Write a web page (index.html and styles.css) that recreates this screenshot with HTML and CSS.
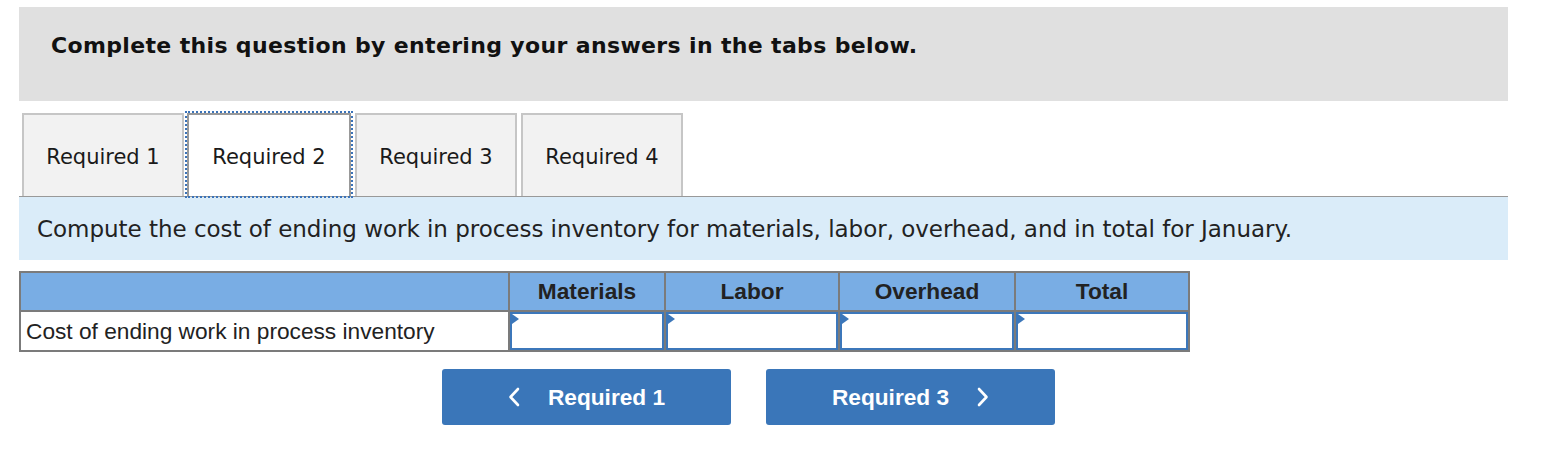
FILE: index.html
```html
<!DOCTYPE html>
<html>
<head>
<meta charset="utf-8">
<link rel="stylesheet" href="styles.css">
</head>
<body>
<div class="wrap">
  <div class="banner">Complete this question by entering your answers in the tabs below.</div>
  <div class="tabs">
    <div class="tab">Required 1</div>
    <div class="tab active">Required 2</div>
    <div class="tab">Required 3</div>
    <div class="tab">Required 4</div>
  </div>
  <div class="prompt">Compute the cost of ending work in process inventory for materials, labor, overhead, and in total for January.</div>
  <table class="grid">
    <thead>
      <tr>
        <th class="c-label"></th>
        <th class="c-mat">Materials</th>
        <th class="c-lab">Labor</th>
        <th class="c-ovh">Overhead</th>
        <th class="c-tot">Total</th>
      </tr>
    </thead>
    <tbody>
      <tr>
        <td class="label">Cost of ending work in process inventory</td>
        <td class="cell"><div class="inp"></div></td>
        <td class="cell"><div class="inp"></div></td>
        <td class="cell"><div class="inp"></div></td>
        <td class="cell"><div class="inp"></div></td>
      </tr>
    </tbody>
  </table>
  <div class="nav">
    <div class="btn">
      <svg class="chev" width="12" height="20" viewBox="0 0 12 20"><polyline points="10,2 2.5,10 10,18" fill="none" stroke="#fff" stroke-width="2.6" stroke-linecap="round" stroke-linejoin="round"/></svg>
      <span>Required 1</span>
    </div>
    <div class="btn">
      <span>Required 3</span>
      <svg class="chev" width="12" height="20" viewBox="0 0 12 20"><polyline points="2,2 9.5,10 2,18" fill="none" stroke="#fff" stroke-width="2.6" stroke-linecap="round" stroke-linejoin="round"/></svg>
    </div>
  </div>
</div>
</body>
</html>
```

FILE: styles.css
```css
html, body {
  margin: 0;
  padding: 0;
  background: #fff;
}
.wrap {
  margin-left: 19px;
  width: 1489px;
  padding-top: 7px;
}
.banner {
  background: #e0e0e0;
  height: 94px;
  box-sizing: border-box;
  padding: 26px 0 0 32px;
  font-family: "DejaVu Sans", Verdana, sans-serif;
  font-weight: bold;
  font-size: 22px;
  letter-spacing: 0.35px;
  line-height: 1.164;
  color: #111;
}
.tabs {
  display: flex;
  gap: 4px;
  margin-top: 12px;
  padding-left: 3px;
  border-bottom: 1px solid #999;
}
.tab {
  width: 162px;
  height: 83px;
  box-sizing: border-box;
  border: 2px solid #c6c6c6;
  border-bottom: none;
  background: #f2f2f2;
  display: flex;
  align-items: center;
  justify-content: center;
  padding-top: 2px;
  font-family: "DejaVu Sans", Verdana, sans-serif;
  font-size: 21px;
  color: #1a1a1a;
}
.tab.active {
  background: #fff;
  border-color: #999;
  outline: 2px dotted #3b73b9;
  outline-offset: 0;
  width: 164px;
  margin-left: -1px;
  margin-right: 0;
}
.prompt {
  background: #daecf9;
  height: 63px;
  box-sizing: border-box;
  padding: 19px 0 0 18px;
  font-family: "DejaVu Sans", Verdana, sans-serif;
  font-size: 23px;
  letter-spacing: -0.03px;
  line-height: 1.164;
  color: #222;
}
.grid {
  margin-top: 11px;
  border-collapse: collapse;
  font-family: "Liberation Sans", Arial, sans-serif;
}
.grid th {
  background: #79ade4;
  border: 2px solid #7b7b7b;
  height: 37px;
  padding: 0;
  font-size: 22.7px;
  font-weight: bold;
  color: #222;
  text-align: center;
}
.c-label { width: 487px; }
.c-mat { width: 154px; }
.c-lab { width: 172px; }
.c-ovh { width: 174px; }
.c-tot { width: 172px; }
.grid td {
  border: 2px solid #7b7b7b;
  padding: 0;
  height: 38px;
}
.grid td.label {
  font-size: 22.7px;
  color: #222;
  padding-left: 5px;
  text-align: left;
}
.grid td.cell {
  padding: 0;
}
.inp {
  position: relative;
  height: 34px;
  border: 2px solid #3c77ba;
  background: #fff;
}
.inp::before {
  content: "";
  position: absolute;
  left: 0;
  top: 0;
  border-left: 7px solid #3c77ba;
  border-top: 5px solid transparent;
  border-bottom: 5px solid transparent;
}
.nav {
  display: flex;
  gap: 35px;
  margin-top: 17px;
  padding-left: 423px;
}
.btn {
  width: 289px;
  height: 56px;
  background: #3a76b9;
  border-radius: 3px;
  display: flex;
  align-items: center;
  justify-content: center;
  gap: 28px;
  font-family: "Liberation Sans", Arial, sans-serif;
  font-weight: bold;
  font-size: 22.7px;
  color: #fff;
}
.chev {
  display: block;
  flex: none;
}
```
